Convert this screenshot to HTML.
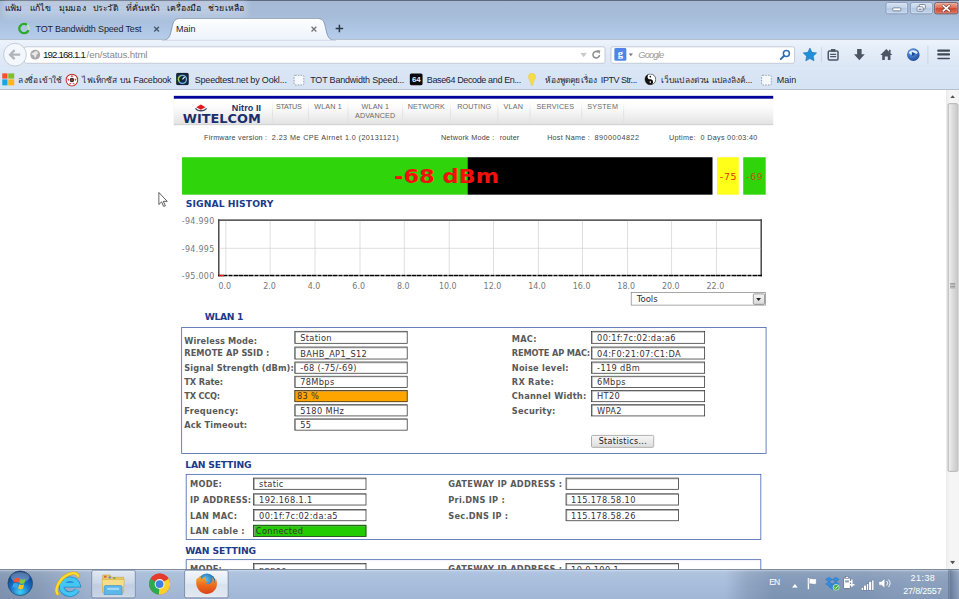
<!DOCTYPE html>
<html lang="th">
<head>
<meta charset="utf-8">
<title>Main</title>
<style>
*{box-sizing:border-box;margin:0;padding:0}
html,body{width:959px;height:599px;overflow:hidden;background:#fff}
#root{position:absolute;left:0;top:0;width:1280px;height:800px;transform-origin:0 0;transform:scale(0.74922,0.74875);overflow:hidden;background:#fff;font-family:"Liberation Sans",sans-serif;color:#000}
.a{position:absolute}
.t{position:absolute;height:20px;line-height:20px;white-space:nowrap}
.t .c{position:absolute;left:0;top:0;transform:translateX(-50%)}
.ui{font-family:"Liberation Sans","DejaVu Sans",sans-serif;color:#111}
.th{font-family:"Liberation Sans","DejaVu Sans",sans-serif;color:#111}
.vd{font-family:"DejaVu Sans","Liberation Sans",sans-serif}
.lb{font-family:"DejaVu Sans","Liberation Sans",sans-serif;font-weight:bold;color:#595959;letter-spacing:.3px}
.hd{font-family:"DejaVu Sans","Liberation Sans",sans-serif;font-weight:bold;color:#1b3b8b}
.nv{font-family:"Liberation Sans",sans-serif;color:#6a6a6a;text-transform:uppercase}
.in{position:absolute;background:#fff;border:1px solid #2e2e2e;box-shadow:inset 1px 1px 0 #9a9a9a}
.val{font-family:"DejaVu Sans","Liberation Sans",sans-serif;color:#3a3038;letter-spacing:.45px}
.ax{font-family:"DejaVu Sans","Liberation Sans",sans-serif;color:#787878}
</style>
</head>
<body>
<div id="root">
<div class="a" style="left:232.31px;top:127.9px;width:799.73px;height:4.27px;background:#04049a"></div>
<div class="a" style="left:232.31px;top:132.18px;width:799.73px;height:34.98px;background:linear-gradient(#ffffff 0%,#fbfbfb 35%,#e3e3e3 100%);border-bottom:1px solid #c4c4c4;box-shadow:0 1px 2px rgba(0,0,0,.18)"></div>
<svg class="a" style="left:259.01px;top:137.52px" width="20.03" height="12.68" viewBox="194 103 15 9.500"><path d="M196.200 107 L200.800 104.100 L205.300 107 L200.800 109.400 Z" fill="#e3181c"/><path d="M194.800 108 C197 112.300 204.600 112.300 207.200 108 L205.900 107.900 C203.800 110.400 197.800 110.400 196.100 107.900 Z" fill="#3a4863"/></svg>
<div class="t vd" style="left:244.46px;top:149px;font-size:15.6px;font-weight:bold;color:#1c2d6b"><span id="t1" style="display:inline-block;transform-origin:0 50%;transform:scaleX(1.1012)">WITELCOM</span></div>
<div class="t" style="left:309.48px;top:134px;font-size:12px;letter-spacing:0.141px;font-weight:bold;color:#1c2d6b"><span id="t2">Nitro II</span></div>
<div class="a" style="left:362.62px;top:133.51px;width:1.0px;height:32.04px;background:linear-gradient(rgba(0,0,0,0),rgba(0,0,0,.10),rgba(0,0,0,0))"></div>
<div class="a" style="left:411.21px;top:133.51px;width:1.0px;height:32.04px;background:linear-gradient(rgba(0,0,0,0),rgba(0,0,0,.10),rgba(0,0,0,0))"></div>
<div class="a" style="left:463.95px;top:133.51px;width:1.0px;height:32.04px;background:linear-gradient(rgba(0,0,0,0),rgba(0,0,0,.10),rgba(0,0,0,0))"></div>
<div class="a" style="left:536.72px;top:133.51px;width:1.0px;height:32.04px;background:linear-gradient(rgba(0,0,0,0),rgba(0,0,0,.10),rgba(0,0,0,0))"></div>
<div class="a" style="left:600.8px;top:133.51px;width:1.0px;height:32.04px;background:linear-gradient(rgba(0,0,0,0),rgba(0,0,0,.10),rgba(0,0,0,0))"></div>
<div class="a" style="left:664.22px;top:133.51px;width:1.0px;height:32.04px;background:linear-gradient(rgba(0,0,0,0),rgba(0,0,0,.10),rgba(0,0,0,0))"></div>
<div class="a" style="left:706.94px;top:133.51px;width:1.0px;height:32.04px;background:linear-gradient(rgba(0,0,0,0),rgba(0,0,0,.10),rgba(0,0,0,0))"></div>
<div class="a" style="left:775.7px;top:133.51px;width:1.0px;height:32.04px;background:linear-gradient(rgba(0,0,0,0),rgba(0,0,0,.10),rgba(0,0,0,0))"></div>
<div class="a" style="left:832.44px;top:133.51px;width:1.0px;height:32.04px;background:linear-gradient(rgba(0,0,0,0),rgba(0,0,0,.10),rgba(0,0,0,0))"></div>
<div class="t nv" style="left:368.22px;top:133px;font-size:9.6px;letter-spacing:-0.368px;"><span id="t3">STATUS</span></div>
<div class="t nv" style="left:419.49px;top:133px;font-size:9.6px;letter-spacing:0.197px;"><span id="t4">WLAN 1</span></div>
<div class="t nv" style="left:482.64px;top:133px;font-size:9.6px;letter-spacing:0.197px;"><span id="t5">WLAN 1</span></div>
<div class="t nv" style="left:473.97px;top:145px;font-size:9.6px;letter-spacing:0.113px;"><span id="t6">ADVANCED</span></div>
<div class="t nv" style="left:544.19px;top:133px;font-size:9.6px;letter-spacing:0.081px;"><span id="t7">NETWORK</span></div>
<div class="t nv" style="left:610.15px;top:133px;font-size:9.6px;letter-spacing:0.19px;"><span id="t8">ROUTING</span></div>
<div class="t nv" style="left:671.96px;top:133px;font-size:9.6px;letter-spacing:0.279px;"><span id="t9">VLAN</span></div>
<div class="t nv" style="left:716.02px;top:133px;font-size:9.6px;letter-spacing:0.284px;"><span id="t10">SERVICES</span></div>
<div class="t nv" style="left:783.71px;top:133px;font-size:9.6px;letter-spacing:0.307px;"><span id="t11">SYSTEM</span></div>
<div class="t" style="left:272.36px;top:174px;font-size:9.6px;letter-spacing:0.306px;color:#444"><span id="t12">Firmware version :</span></div>
<div class="t" style="left:362.88px;top:174px;font-size:9.6px;letter-spacing:0.558px;color:#444"><span id="t13">2.23 Me CPE Airnet 1.0 (20131121)</span></div>
<div class="t" style="left:588.52px;top:174px;font-size:9.6px;letter-spacing:0.316px;color:#444"><span id="t14">Network Mode :</span></div>
<div class="t" style="left:667.16px;top:174px;font-size:9.6px;letter-spacing:0.141px;color:#444"><span id="t15">router</span></div>
<div class="t" style="left:730.31px;top:174px;font-size:9.6px;letter-spacing:0.355px;color:#444"><span id="t16">Host Name :</span></div>
<div class="t" style="left:793.59px;top:174px;font-size:9.6px;letter-spacing:0.643px;color:#444"><span id="t17">8900004822</span></div>
<div class="t" style="left:892.92px;top:174px;font-size:9.6px;letter-spacing:0.386px;color:#444"><span id="t18">Uptime:</span></div>
<div class="t" style="left:935.11px;top:174px;font-size:9.6px;letter-spacing:0.407px;color:#444"><span id="t19">0 Days 00:03:40</span></div>
<div class="a" style="left:242.59px;top:210.01px;width:381.44px;height:49.93px;background:#2fd50a"></div>
<div class="a" style="left:624.03px;top:210.01px;width:327.24px;height:49.93px;background:#000"></div>
<div class="a" style="left:956.61px;top:210.01px;width:29.64px;height:49.8px;background:#ffff1a"></div>
<div class="a" style="left:991.99px;top:210.01px;width:30.44px;height:49.8px;background:#2fd50a"></div>
<div class="t vd" style="left:526.03px;top:225px;font-size:27px;font-weight:bold;color:#f2100c"><span id="t20" style="display:inline-block;transform-origin:0 50%;transform:scaleX(1.1106)">-68 dBm</span></div>
<div class="t vd" style="left:960.75px;top:226px;font-size:12.5px;letter-spacing:0.939px;color:#dd3500"><span id="t21">-75</span></div>
<div class="t vd" style="left:995.73px;top:226px;font-size:12.5px;letter-spacing:1.004px;color:#c8500a"><span id="t22">-69</span></div>
<div class="t hd" style="left:248.06px;top:263px;font-size:12.3px;letter-spacing:0.085px;"><span id="t23">SIGNAL HISTORY</span></div>
<div class="a" style="left:291.05px;top:292.92px;width:725.77px;height:76.37px;background:#fff;border:2px solid #4a4a4a;border-bottom:none"></div>
<div class="a" style="left:300.97px;top:295.06px;width:1.0px;height:72.1px;background:#d4d4d4"></div>
<div class="t ax" style="left:300.13px;width:0;top:372px;font-size:10.6px;"><span id="t24" class="c">0.0</span></div>
<div class="a" style="left:360.49px;top:295.06px;width:1.0px;height:72.1px;background:#d4d4d4"></div>
<div class="t ax" style="left:359.65px;width:0;top:372px;font-size:10.6px;"><span id="t25" class="c">2.0</span></div>
<div class="a" style="left:420.01px;top:295.06px;width:1.0px;height:72.1px;background:#d4d4d4"></div>
<div class="t ax" style="left:419.17px;width:0;top:372px;font-size:10.6px;"><span id="t26" class="c">4.0</span></div>
<div class="a" style="left:479.53px;top:295.06px;width:1.0px;height:72.1px;background:#d4d4d4"></div>
<div class="t ax" style="left:478.69px;width:0;top:372px;font-size:10.6px;"><span id="t27" class="c">6.0</span></div>
<div class="a" style="left:539.05px;top:295.06px;width:1.0px;height:72.1px;background:#d4d4d4"></div>
<div class="t ax" style="left:538.21px;width:0;top:372px;font-size:10.6px;"><span id="t28" class="c">8.0</span></div>
<div class="a" style="left:598.57px;top:295.06px;width:1.0px;height:72.1px;background:#d4d4d4"></div>
<div class="t ax" style="left:597.73px;width:0;top:372px;font-size:10.6px;"><span id="t29" class="c">10.0</span></div>
<div class="a" style="left:658.09px;top:295.06px;width:1.0px;height:72.1px;background:#d4d4d4"></div>
<div class="t ax" style="left:657.25px;width:0;top:372px;font-size:10.6px;"><span id="t30" class="c">12.0</span></div>
<div class="a" style="left:717.61px;top:295.06px;width:1.0px;height:72.1px;background:#d4d4d4"></div>
<div class="t ax" style="left:716.77px;width:0;top:372px;font-size:10.6px;"><span id="t31" class="c">14.0</span></div>
<div class="a" style="left:777.13px;top:295.06px;width:1.0px;height:72.1px;background:#d4d4d4"></div>
<div class="t ax" style="left:776.29px;width:0;top:372px;font-size:10.6px;"><span id="t32" class="c">16.0</span></div>
<div class="a" style="left:836.65px;top:295.06px;width:1.0px;height:72.1px;background:#d4d4d4"></div>
<div class="t ax" style="left:835.81px;width:0;top:372px;font-size:10.6px;"><span id="t33" class="c">18.0</span></div>
<div class="a" style="left:896.17px;top:295.06px;width:1.0px;height:72.1px;background:#d4d4d4"></div>
<div class="t ax" style="left:895.33px;width:0;top:372px;font-size:10.6px;"><span id="t34" class="c">20.0</span></div>
<div class="a" style="left:955.69px;top:295.06px;width:1.0px;height:72.1px;background:#d4d4d4"></div>
<div class="t ax" style="left:954.85px;width:0;top:372px;font-size:10.6px;"><span id="t35" class="c">22.0</span></div>
<div class="a" style="left:293.06px;top:330.97px;width:721.9px;height:1.0px;background:#d4d4d4"></div>
<div class="a" style="left:291.05px;top:367.02px;width:725.77px;height:2.27px;background:repeating-linear-gradient(90deg,#000 0,#000 5px,#777 5px,#777 7px)"></div>
<div class="a" style="left:292.12px;top:367.02px;width:6.94px;height:2.27px;background:#e01818"></div>
<div class="t ax" style="left:242.59px;top:285px;font-size:10.6px;letter-spacing:0.417px;"><span id="t36">-94.990</span></div>
<div class="t ax" style="left:242.59px;top:322px;font-size:10.6px;letter-spacing:0.417px;"><span id="t37">-94.995</span></div>
<div class="t ax" style="left:242.59px;top:359px;font-size:10.6px;letter-spacing:0.417px;"><span id="t38">-95.000</span></div>
<div class="a" style="left:842.46px;top:390.39px;width:179.31px;height:17.62px;background:#fff;border:1px solid #8a8a8a"></div>
<div class="a" style="left:1004.81px;top:391.59px;width:15.75px;height:15.35px;background:linear-gradient(#f4f4f4,#d9d9d9);border:1px solid #7a7a7a;border-radius:2px"></div>
<svg class="a" style="left:1009.32px;top:397.87px" width="7" height="4" viewBox="0 0 8 5"><path d="M0 0h8L4 5z" fill="#222"/></svg>
<div class="t vd" style="left:849.8px;top:389px;font-size:11.5px;letter-spacing:-0.076px;color:#3a3038"><span id="t39">Tools</span></div>
<div class="t hd" style="left:273.3px;top:414px;font-size:12.3px;letter-spacing:-0.501px;"><span id="t40">WLAN 1</span></div>
<div class="a" style="left:242.19px;top:436.85px;width:780.51px;height:169.16px;border:1px solid #3758a8"></div>
<div class="t lb" style="left:245.93px;top:447px;font-size:11px;letter-spacing:0.155px;"><span id="t41">Wireless Mode:</span></div>
<div class="in" style="left:393.19px;top:442.46px;width:151.13px;height:16.42px;background:#fff"></div>
<div class="t val" style="left:400.67px;top:442px;font-size:11px;"><span id="t42">Station</span></div>
<div class="t lb" style="left:245.93px;top:463px;font-size:11px;letter-spacing:0.076px;"><span id="t43">REMOTE AP SSID :</span></div>
<div class="in" style="left:393.19px;top:463.42px;width:151.13px;height:16.42px;background:#fff"></div>
<div class="t val" style="left:400.67px;top:464px;font-size:11px;"><span id="t44">BAHB_AP1_S12</span></div>
<div class="t lb" style="left:245.93px;top:482px;font-size:11px;letter-spacing:0.138px;"><span id="t45">Signal Strength (dBm):</span></div>
<div class="in" style="left:393.19px;top:482.51px;width:151.13px;height:16.42px;background:#fff"></div>
<div class="t val" style="left:400.67px;top:482px;font-size:11px;"><span id="t46">-68 (-75/-69)</span></div>
<div class="t lb" style="left:245.93px;top:501px;font-size:11px;letter-spacing:-0.147px;"><span id="t47">TX Rate:</span></div>
<div class="in" style="left:393.19px;top:501.6px;width:151.13px;height:16.42px;background:#fff"></div>
<div class="t val" style="left:400.67px;top:501px;font-size:11px;"><span id="t48">78Mbps</span></div>
<div class="t lb" style="left:245.93px;top:520px;font-size:11px;letter-spacing:-0.32px;"><span id="t49">TX CCQ:</span></div>
<div class="in" style="left:393.19px;top:520.69px;width:151.13px;height:16.42px;background:#ffa500"></div>
<div class="t val" style="left:396.4px;top:520px;font-size:11px;"><span id="t50">83 %</span></div>
<div class="t lb" style="left:245.93px;top:540px;font-size:11px;letter-spacing:0.381px;"><span id="t51">Frequency:</span></div>
<div class="in" style="left:393.19px;top:539.79px;width:151.13px;height:16.42px;background:#fff"></div>
<div class="t val" style="left:400.67px;top:540px;font-size:11px;"><span id="t52">5180 MHz</span></div>
<div class="t lb" style="left:245.93px;top:559px;font-size:11px;letter-spacing:0.221px;"><span id="t53">Ack Timeout:</span></div>
<div class="in" style="left:393.19px;top:558.88px;width:151.13px;height:16.42px;background:#fff"></div>
<div class="t val" style="left:400.67px;top:559px;font-size:11px;"><span id="t54">55</span></div>
<div class="t lb" style="left:683.18px;top:444px;font-size:11px;"><span id="t55">MAC:</span></div>
<div class="in" style="left:789.45px;top:442.46px;width:151.13px;height:16.42px;background:#fff"></div>
<div class="t val" style="left:796.93px;top:442px;font-size:11px;"><span id="t56">00:1f:7c:02:da:a6</span></div>
<div class="t lb" style="left:683.18px;top:463px;font-size:11px;letter-spacing:-0.225px;"><span id="t57">REMOTE AP MAC:</span></div>
<div class="in" style="left:789.45px;top:463.42px;width:151.13px;height:16.42px;background:#fff"></div>
<div class="t val" style="left:796.93px;top:464px;font-size:11px;"><span id="t58">04:F0:21:07:C1:DA</span></div>
<div class="t lb" style="left:683.18px;top:482px;font-size:11px;"><span id="t59">Noise level:</span></div>
<div class="in" style="left:789.45px;top:482.51px;width:151.13px;height:16.42px;background:#fff"></div>
<div class="t val" style="left:796.93px;top:482px;font-size:11px;"><span id="t60">-119 dBm</span></div>
<div class="t lb" style="left:683.18px;top:501px;font-size:11px;"><span id="t61">RX Rate:</span></div>
<div class="in" style="left:789.45px;top:501.6px;width:151.13px;height:16.42px;background:#fff"></div>
<div class="t val" style="left:796.93px;top:501px;font-size:11px;"><span id="t62">6Mbps</span></div>
<div class="t lb" style="left:683.18px;top:520px;font-size:11px;"><span id="t63">Channel Width:</span></div>
<div class="in" style="left:789.45px;top:520.69px;width:151.13px;height:16.42px;background:#fff"></div>
<div class="t val" style="left:796.93px;top:520px;font-size:11px;"><span id="t64">HT20</span></div>
<div class="t lb" style="left:683.18px;top:540px;font-size:11px;"><span id="t65">Security:</span></div>
<div class="in" style="left:789.45px;top:539.79px;width:151.13px;height:16.42px;background:#fff"></div>
<div class="t val" style="left:796.93px;top:540px;font-size:11px;"><span id="t66">WPA2</span></div>
<div class="a" style="left:789.32px;top:580.77px;width:83.58px;height:17.36px;background:linear-gradient(#f6f6f6,#dedede);border:1px solid #959595;border-radius:2px"></div>
<div class="t val" style="left:799.07px;top:579px;font-size:10.6px;letter-spacing:0.463px;color:#222"><span id="t67">Statistics...</span></div>
<div class="t hd" style="left:247.26px;top:611px;font-size:12.3px;letter-spacing:-0.282px;"><span id="t68">LAN SETTING</span></div>
<div class="a" style="left:247.8px;top:632.84px;width:768.49px;height:88.52px;border:1px solid #3758a8"></div>
<div class="t lb" style="left:253.67px;top:638px;font-size:11px;"><span id="t69">MODE:</span></div>
<div class="in" style="left:338.32px;top:637.92px;width:151.13px;height:16.42px;background:#fff"></div>
<div class="t val" style="left:345.79px;top:638px;font-size:11px;"><span id="t70">static</span></div>
<div class="t lb" style="left:253.67px;top:659px;font-size:11px;"><span id="t71">IP ADDRESS:</span></div>
<div class="in" style="left:338.32px;top:658.88px;width:151.13px;height:16.42px;background:#fff"></div>
<div class="t val" style="left:345.79px;top:659px;font-size:11px;"><span id="t72">192.168.1.1</span></div>
<div class="t lb" style="left:253.67px;top:680px;font-size:11px;"><span id="t73">LAN MAC:</span></div>
<div class="in" style="left:338.32px;top:679.84px;width:151.13px;height:16.42px;background:#fff"></div>
<div class="t val" style="left:345.79px;top:680px;font-size:11px;"><span id="t74">00:1f:7c:02:da:a5</span></div>
<div class="t lb" style="left:253.67px;top:700px;font-size:11px;"><span id="t75">LAN cable :</span></div>
<div class="in" style="left:338.32px;top:700.8px;width:151.13px;height:16.42px;background:#22cc00"></div>
<div class="t val" style="left:341.52px;top:700px;font-size:11px;"><span id="t76">Connected</span></div>
<div class="t lb" style="left:598.4px;top:638px;font-size:11px;letter-spacing:0.361px;"><span id="t77">GATEWAY IP ADDRESS :</span></div>
<div class="in" style="left:754.74px;top:637.92px;width:151.13px;height:16.42px;background:#fff"></div>
<div class="t lb" style="left:598.4px;top:659px;font-size:11px;"><span id="t78">Pri.DNS IP :</span></div>
<div class="in" style="left:754.74px;top:658.88px;width:151.13px;height:16.42px;background:#fff"></div>
<div class="t val" style="left:762.22px;top:659px;font-size:11px;"><span id="t79">115.178.58.10</span></div>
<div class="t lb" style="left:598.4px;top:680px;font-size:11px;"><span id="t80">Sec.DNS IP :</span></div>
<div class="in" style="left:754.74px;top:679.84px;width:151.13px;height:16.42px;background:#fff"></div>
<div class="t val" style="left:762.22px;top:680px;font-size:11px;"><span id="t81">115.178.58.26</span></div>
<div class="t hd" style="left:247.26px;top:726px;font-size:12.3px;letter-spacing:-0.186px;"><span id="t82">WAN SETTING</span></div>
<div class="a" style="left:247.8px;top:746.86px;width:768.49px;height:80.91px;border:1px solid #3758a8"></div>
<div class="t lb" style="left:253.67px;top:751px;font-size:11px;"><span id="t83">MODE:</span></div>
<div class="in" style="left:338.32px;top:751.8px;width:151.13px;height:16.42px;background:#fff"></div>
<div class="t val" style="left:345.79px;top:752px;font-size:11px;"><span id="t84">pppoe</span></div>
<div class="t lb" style="left:598.4px;top:751px;font-size:11px;letter-spacing:0.361px;"><span id="t85">GATEWAY IP ADDRESS :</span></div>
<div class="in" style="left:754.74px;top:751.8px;width:151.13px;height:16.42px;background:#fff"></div>
<div class="t val" style="left:762.22px;top:752px;font-size:11px;"><span id="t86">10.0.100.1</span></div>
<div class="a" style="left:1263.28px;top:120.16px;width:17.36px;height:640.32px;background:linear-gradient(90deg,#efefef,#f6f6f6 30%,#f4f4f4);border-left:1px solid #e6e6e6"></div>
<div class="a" style="left:1264.75px;top:137.52px;width:14.29px;height:491.99px;background:linear-gradient(90deg,#f2f2f2 0,#dcdcdc 45%,#c9c9c9 100%);border:1px solid #9b9b9b;border-radius:2px"></div>
<svg class="a" style="left:1268.33px;top:126.77px" width="7" height="4.500" viewBox="0 0 8 5"><path d="M0 5h8L4 0z" fill="#505050"/></svg>
<svg class="a" style="left:1268.33px;top:749.1999999999999px" width="7" height="4.500" viewBox="0 0 8 5"><path d="M0 0h8L4 5z" fill="#505050"/></svg>
<div class="a" style="left:1268.36px;top:378.37px;width:6.94px;height:0.93px;background:#8c8c8c"></div>
<div class="a" style="left:1268.36px;top:380.37px;width:6.94px;height:0.93px;background:#8c8c8c"></div>
<div class="a" style="left:1268.36px;top:382.38px;width:6.94px;height:0.93px;background:#8c8c8c"></div>
<div class="a" style="left:1268.36px;top:384.38px;width:6.94px;height:0.93px;background:#8c8c8c"></div>
<div class="a" style="left:0.0px;top:0.0px;width:1281.71px;height:53.14px;background:linear-gradient(#a5b9d5 0,#a6bcd9 38%,#abc3e0 62%,#b5cdea 100%);border-top:1px solid #2e3d57;border-bottom:1px solid #71849d"></div>
<div class="a" style="left:0.0px;top:53.14px;width:1281.71px;height:38.99px;background:linear-gradient(#edf3fb 0,#e3ecf8 40%,#dae6f5 100%)"></div>
<div class="a" style="left:0.0px;top:92.12px;width:1281.71px;height:28.04px;background:linear-gradient(#dae6f5,#d6e3f4);border-bottom:1px solid #9eabbc"></div>
<div class="a" style="left:13.35px;top:6.68px;width:307.08px;height:6.68px;background:rgba(255,255,255,.26);box-shadow:0 0 9px 9px rgba(255,255,255,.26)"></div>
<div class="t th" style="left:6.68px;top:1px;font-size:11.6px;"><span id="t87">แฟ้ม</span></div>
<div class="t th" style="left:40.05px;top:1px;font-size:11.6px;"><span id="t88">แก้ไข</span></div>
<div class="t th" style="left:78.1px;top:1px;font-size:11.6px;"><span id="t89">มุมมอง</span></div>
<div class="t th" style="left:124.17px;top:1px;font-size:11.6px;"><span id="t90">ประวัติ</span></div>
<div class="t th" style="left:167.56px;top:1px;font-size:11.6px;"><span id="t91">ที่คั่นหน้า</span></div>
<div class="t th" style="left:222.96px;top:1px;font-size:11.6px;"><span id="t92">เครื่องมือ</span></div>
<div class="t th" style="left:277.7px;top:1px;font-size:11.6px;"><span id="t93">ช่วยเหลือ</span></div>
<div class="a" style="left:1182.38px;top:3.34px;width:29.37px;height:15.75px;background:linear-gradient(#d3e0f1,#c2d3ea 48%,#b4c8e3 52%,#c3d5ec);border:1px solid #7f93b1;border-radius:3px;box-shadow:inset 0 0 0 1px rgba(255,255,255,.5)"></div>
<div class="a" style="left:1215.49px;top:3.34px;width:29.37px;height:15.75px;background:linear-gradient(#d3e0f1,#c2d3ea 48%,#b4c8e3 52%,#c3d5ec);border:1px solid #7f93b1;border-radius:3px;box-shadow:inset 0 0 0 1px rgba(255,255,255,.5)"></div>
<div class="a" style="left:1247.0px;top:3.34px;width:31.78px;height:15.75px;background:linear-gradient(#eea995,#e06a52 48%,#d24a32 52%,#dd6e55);border:1px solid #6a3a3a;border-radius:3px;box-shadow:inset 0 0 0 1px rgba(255,255,255,.35)"></div>
<div class="a" style="left:1190.92px;top:10.15px;width:12.02px;height:4.41px;background:#fff;border:1px solid #55657f;border-radius:2px"></div>
<svg class="a" style="left:1223.27px;top:4.91px" width="13" height="11" viewBox="0 0 13 11"><rect x="4" y="1" width="8" height="6" rx="1" fill="#fff" stroke="#55657f"/><rect x="1" y="4" width="8" height="6" rx="1" fill="#fff" stroke="#55657f"/><rect x="3" y="6.500" width="4" height="2" fill="#7f90aa"/></svg>
<svg class="a" style="left:1257.15px;top:6.08px" width="12" height="10" viewBox="0 0 12 10"><path d="M2 1.500L10 8.500M10 1.500L2 8.500" stroke="#6b3530" stroke-width="3.800" stroke-linecap="square"/><path d="M2 1.500L10 8.500M10 1.500L2 8.500" stroke="#fff" stroke-width="2.200" stroke-linecap="square"/></svg>
<svg class="a" style="left:216.29px;top:23.77px" width="232" height="30" viewBox="0 0 232 30"><defs><linearGradient id="tg" x1="0" y1="0" x2="0" y2="1"><stop offset="0" stop-color="#fdfeff"/><stop offset="1" stop-color="#edf3fb"/></linearGradient></defs><path d="M0 30 C10 30 11 24 13.5 13 C15.5 3 18 0.5 26 0.5 L206 0.5 C214 0.5 216.500 3 218.500 13 C221 24 222 30 232 30 Z" fill="url(#tg)" stroke="#7c8ea8" stroke-width="1.100"/><rect x="0" y="29.2" width="232" height="2" fill="#edf3fb"/></svg>
<div class="t ui" style="left:47.4px;top:29px;font-size:12px;letter-spacing:-0.199px;color:#1c2433"><span id="t94">TOT Bandwidth Speed Test</span></div>
<div class="t ui" style="left:234.98px;top:29px;font-size:12px;letter-spacing:0.005px;color:#2a1a2a"><span id="t95">Main</span></div>
<svg class="a" style="left:23.64px;top:30.450000000000003px" width="16" height="16" viewBox="0 0 16 16"><circle cx="8" cy="8" r="6.300" fill="none" stroke="#bfe3bf" stroke-width="3"/><path d="M12 3.200 A6.300 6.300 0 1 0 14 10.200" fill="none" stroke="#2fa82f" stroke-width="3.200"/></svg>
<svg class="a" style="left:203.95px;top:33.72px" width="10" height="10" viewBox="0 0 10 10"><path d="M1.800 1.800L8.200 8.200M8.200 1.800L1.800 8.200" stroke="#4a5870" stroke-width="1.800"/></svg>
<svg class="a" style="left:414.23px;top:33.72px" width="10" height="10" viewBox="0 0 10 10"><path d="M1.800 1.800L8.200 8.200M8.200 1.800L1.800 8.200" stroke="#777" stroke-width="1.800"/></svg>
<svg class="a" style="left:447.0px;top:32.45px" width="12" height="12" viewBox="0 0 12 12"><path d="M6 1V11M1 6H11" stroke="#2b3648" stroke-width="2"/></svg>
<div class="a" style="left:32.04px;top:61.68px;width:776.23px;height:22.96px;background:#fff;border:1px solid #b3bfce;border-radius:3px"></div>
<svg class="a" style="left:2.629999999999999px;top:56.03px" width="34" height="34" viewBox="0 0 34 34"><circle cx="17" cy="17" r="15.200" fill="#f4f8fd" stroke="#b3bfce" stroke-width="1"/><path d="M24 17H11M16.500 11L10.500 17L16.500 23" fill="none" stroke="#b1b5bb" stroke-width="3.200" stroke-linejoin="miter"/></svg>
<svg class="a" style="left:38.73px;top:65.03px" width="16" height="16" viewBox="0 0 16 16"><circle cx="8" cy="8" r="6.600" fill="#a9a9a9"/><path d="M3 6c2-1 3 0 4-2 1-1 3-1 4 0l1 2-2 2c-1 1 0 3-2 4-1 0-1-2-2-3S3 8 3 6z" fill="#e8e8e8"/></svg>
<div class="t ui" style="left:57.41px;top:63px;font-size:13px;letter-spacing:-1.155px;color:#111"><span id="t96">192.168.1.1</span></div>
<div class="t ui" style="left:115.62px;top:63px;font-size:13px;letter-spacing:-0.231px;color:#8a8a8a"><span id="t97">/en/status.html</span></div>
<svg class="a" style="left:774.31px;top:70.03px" width="10" height="7" viewBox="0 0 10 7"><path d="M0.500 0.500h9L5 6.500z" fill="#c9c9c9"/></svg>
<svg class="a" style="left:788.99px;top:65.9px" width="14" height="14" viewBox="0 0 14 14"><path d="M11.200 7.600A4.400 4.400 0 1 1 9.600 3.600" fill="none" stroke="#8d8d8d" stroke-width="2"/><path d="M7.600 0.800L12.400 1.400L11 6z" fill="#8d8d8d"/></svg>
<div class="a" style="left:815.22px;top:61.68px;width:246.19px;height:22.96px;background:#fff;border:1px solid #b3bfce;border-radius:3px"></div>
<div class="a" style="left:820.43px;top:64.35px;width:15.22px;height:17.09px;background:#4d86ea;border-radius:2px"></div>
<div class="t ui" style="left:828.17px;width:0;top:62px;font-size:14px;color:#fff;font-weight:bold;font-family:'Liberation Serif',serif"><span id="t98" class="c">g</span></div>
<svg class="a" style="left:839.46px;top:71.43px" width="6" height="4" viewBox="0 0 6 4"><path d="M0 0h6L3 4z" fill="#7a7a7a"/></svg>
<div class="t ui" style="left:851.8px;top:63px;font-size:12.5px;letter-spacing:-1.12px;color:#9a9a9a;font-style:italic"><span id="t99">Google</span></div>
<svg class="a" style="left:1039.8px;top:64.9px" width="16" height="16" viewBox="0 0 16 16"><circle cx="9.600" cy="6.400" r="4" fill="none" stroke="#2f6fb5" stroke-width="2"/><path d="M6.600 9.400L2 14" stroke="#2f6fb5" stroke-width="2.600" stroke-linecap="round"/></svg>
<svg class="a" style="left:1071.04px;top:62.5px" width="20" height="20" viewBox="0 0 20 20"><path d="M10 1.200l2.700 5.700 6.200.8-4.500 4.300 1.100 6.200L10 15.200l-5.500 3 1.100-6.200L1.100 7.700l6.200-.8z" fill="#1f8fdc" stroke="#1a6fb0" stroke-width=".8"/></svg>
<div class="a" style="left:1096.4px;top:63.42px;width:0.93px;height:19.36px;background:#c3cedd"></div>
<svg class="a" style="left:1102.62px;top:63.5px" width="18" height="18" viewBox="0 0 18 18"><rect x="2.500" y="4" width="13" height="12" rx="1.500" fill="none" stroke="#4b5563" stroke-width="2"/><rect x="6" y="1.500" width="6" height="3.500" fill="#4b5563"/><path d="M5 8.500h8M5 11.500h8" stroke="#4b5563" stroke-width="1.600"/></svg>
<svg class="a" style="left:1137.6px;top:63.5px" width="18" height="18" viewBox="0 0 18 18"><path d="M6 1.500h6v7h4.200L9 16.500 1.800 8.500H6z" fill="#4b5563"/></svg>
<svg class="a" style="left:1173.51px;top:63.5px" width="18" height="18" viewBox="0 0 18 18"><path d="M9 1.500L17 9.500h-2.500V16H11v-4.500H7V16H3.500V9.500H1z" fill="#4b5563"/><rect x="12.500" y="2.500" width="2.200" height="4" fill="#4b5563"/></svg>
<svg class="a" style="left:1208.96px;top:62.5px" width="20" height="20" viewBox="0 0 20 20"><defs><radialGradient id="gb" cx=".4" cy=".3" r=".8"><stop offset="0" stop-color="#6aa8ec"/><stop offset="1" stop-color="#123f8f"/></radialGradient></defs><circle cx="10" cy="10" r="8.400" fill="url(#gb)"/><path d="M4 7c3-4 9-4 12 0-2 4-9 5-12 0z" fill="#fff" opacity=".85"/><path d="M8 6l6 3-6 3z" fill="#1a4da0"/></svg>
<div class="a" style="left:1237.92px;top:60.75px;width:0.93px;height:24.7px;background:#c3cedd"></div>
<div class="a" style="left:1250.73px;top:65.75px;width:17.36px;height:2.8px;background:#3f4957;border-radius:1px"></div>
<div class="a" style="left:1250.73px;top:71.23px;width:17.36px;height:2.8px;background:#3f4957;border-radius:1px"></div>
<div class="a" style="left:1250.73px;top:76.7px;width:17.36px;height:2.8px;background:#3f4957;border-radius:1px"></div>
<div class="a" style="left:2.94px;top:98.0px;width:7.48px;height:7.34px;background:#f0532a"></div>
<div class="a" style="left:11.48px;top:98.0px;width:7.48px;height:7.34px;background:#83bd2a"></div>
<div class="a" style="left:2.94px;top:106.28px;width:7.48px;height:7.34px;background:#1ba3ea"></div>
<div class="a" style="left:11.48px;top:106.28px;width:7.48px;height:7.34px;background:#fcb714"></div>
<div class="t th" style="left:24.57px;top:97px;font-size:11.2px;color:#1c2230"><span id="t100">ลงชื่อเข้าใช้</span></div>
<svg class="a" style="left:87.13px;top:97.68px" width="18" height="18" viewBox="0 0 18 18"><circle cx="9" cy="9" r="7.800" fill="#fff" stroke="#c42a2a" stroke-width="1.400"/><path d="M9 2.200l2.200 2.400H6.800zM2.600 7l2.800.4-1 3zM15.400 7l-2.800.4 1 3zM5 15l1.400-2.600 2 1.800zM13 15l-1.400-2.600-2 1.800z" fill="#d63a3a"/><circle cx="9" cy="9" r="3" fill="#333"/><circle cx="9" cy="9" r="1.300" fill="#d63a3a"/></svg>
<div class="t th" style="left:110.01px;top:97px;font-size:11.2px;color:#1c2230"><span id="t101">ไฟเท็กซัส บน</span></div>
<div class="t ui" style="left:178.24px;top:97px;font-size:12px;letter-spacing:-0.3px;color:#1c2230"><span id="t102">Facebook</span></div>
<svg class="a" style="left:234.62px;top:97.37px" width="17" height="17" viewBox="0 0 17 17"><rect x=".5" y=".5" width="16" height="16" rx="2" fill="#16283e" stroke="#0b1624"/><circle cx="8.500" cy="9" r="5.400" fill="none" stroke="#6fb6e6" stroke-width="1.800"/><path d="M3.800 11.500A5.400 5.400 0 0 1 6 4.200" fill="none" stroke="#9ad14b" stroke-width="1.800"/><path d="M8.500 9l3-3.200" stroke="#fff" stroke-width="1.400"/></svg>
<div class="t ui" style="left:259.81px;top:97px;font-size:12px;letter-spacing:-0.216px;color:#1c2230"><span id="t103">Speedtest.net by Ookl...</span></div>
<svg class="a" style="left:390.8px;top:98.54px" width="16" height="16" viewBox="0 0 16 16"><rect x="1.500" y="1.500" width="13" height="13" rx="1.500" fill="#f4f8fd" stroke="#8a93a3" stroke-width="1.200" stroke-dasharray="2 1.600"/></svg>
<div class="t ui" style="left:414.02px;top:97px;font-size:12px;letter-spacing:-0.254px;color:#1c2230"><span id="t104">TOT Bandwidth Speed...</span></div>
<div class="a" style="left:547.4px;top:97.73px;width:16.29px;height:16.29px;background:#0b0b0b;border-radius:2px"></div>
<div class="t ui" style="left:555.54px;width:0;top:96px;font-size:10.5px;color:#f0f0f0;font-weight:bold;letter-spacing:-.3px"><span id="t105" class="c">64</span></div>
<div class="t ui" style="left:569.69px;top:97px;font-size:12px;letter-spacing:-0.494px;color:#1c2230"><span id="t106">Base64 Decode and En...</span></div>
<svg class="a" style="left:704.28px;top:97.14px" width="12" height="18" viewBox="0 0 12 18"><path d="M6 .8C2.600.8.800 3.400 1.400 6.600 2 9.600 4.200 11 5 17h2c.8-6 3-7.400 3.600-10.400C11.200 3.400 9.400.8 6 .8z" fill="#f7dc4a" stroke="#e4c62e" stroke-width=".6"/></svg>
<div class="t th" style="left:728.04px;top:97px;font-size:11.2px;color:#1c2230"><span id="t107">ห้องพูดคุยเรื่อง</span></div>
<div class="t ui" style="left:802.0px;top:97px;font-size:12px;letter-spacing:-0.623px;color:#1c2230"><span id="t108">IPTV Str...</span></div>
<svg class="a" style="left:860.36px;top:98.28px" width="16" height="16" viewBox="0 0 16 16"><circle cx="8" cy="8" r="7.200" fill="#fff" stroke="#111" stroke-width=".8"/><path d="M8 .8a7.200 7.200 0 0 0 0 14.400a3.600 3.600 0 0 0 0-7.200a3.600 3.600 0 0 1 0-7.200z" fill="#111"/><circle cx="8" cy="4.400" r="1.100" fill="#111"/><circle cx="8" cy="11.600" r="1.100" fill="#fff"/></svg>
<div class="t th" style="left:882.78px;top:97px;font-size:11.2px;color:#1c2230"><span id="t109">เว็บแปลงด่วน แปลงลิงค์...</span></div>
<svg class="a" style="left:1015.23px;top:98.54px" width="16" height="16" viewBox="0 0 16 16"><rect x="1.500" y="1.500" width="13" height="13" rx="1.500" fill="#f4f8fd" stroke="#8a93a3" stroke-width="1.200" stroke-dasharray="2 1.600"/></svg>
<div class="t ui" style="left:1036.72px;top:97px;font-size:12px;letter-spacing:0.005px;color:#1c2230"><span id="t110">Main</span></div>
<div class="a" style="left:0.0px;top:759.81px;width:1281.71px;height:41.26px;background:linear-gradient(rgba(255,255,255,.28) 0,rgba(255,255,255,.08) 10%,rgba(255,255,255,0) 45%,rgba(40,60,100,.06) 100%),linear-gradient(90deg,#8195b2 0,#899db9 4%,#9cafca 8%,#a6bad6 10.500%,#a8bedc 25%,#a8bedc 75.500%,#8fa5c2 77.800%,#8298b7 80.500%,#8399b8 90%,#8ba0bd 95%,#8a9fbc 100%);border-top:1px solid #4f5f78"></div>
<div class="a" style="left:0.0px;top:760.88px;width:1281.71px;height:0.93px;background:rgba(255,255,255,.35)"></div>
<div class="a" style="left:122.03px;top:761.01px;width:59.01px;height:38.45px;background:linear-gradient(rgba(255,255,255,.62),rgba(255,255,255,.42) 48%,rgba(255,255,255,.30) 52%,rgba(255,255,255,.45));border:1px solid #6e819c;border-radius:3px;box-shadow:inset 0 0 0 1px rgba(255,255,255,.5)"></div>
<div class="a" style="left:246.33px;top:761.01px;width:58.48px;height:38.45px;background:linear-gradient(rgba(255,255,255,.85),rgba(255,255,255,.66) 48%,rgba(255,255,255,.55) 52%,rgba(255,255,255,.7));border:1px solid #6e819c;border-radius:3px;box-shadow:inset 0 0 0 1px rgba(255,255,255,.6)"></div>
<svg class="a" style="left:9.100000000000001px;top:761.44px" width="36" height="36" viewBox="0 0 36 36"><defs><radialGradient id="ob" cx=".5" cy=".85" r=".9"><stop offset="0" stop-color="#3fd0f5"/><stop offset=".45" stop-color="#1a6fc2"/><stop offset="1" stop-color="#0c2f6c"/></radialGradient></defs><circle cx="18" cy="18" r="16.400" fill="url(#ob)" stroke="#27476f" stroke-width="1"/><ellipse cx="18" cy="10" rx="12.500" ry="7" fill="#fff" opacity=".28"/><path d="M10.500 11.500c2.200-1.300 4.200-1.200 6.400.2l-1.400 5.600c-2.200-1.400-4.200-1.500-6.400-.2z" fill="#f0562a"/><path d="M18.400 12.200c2.200 1.300 4.300 1.300 6.600 0l-1.400 5.600c-2.300 1.300-4.400 1.300-6.600 0z" fill="#8cc63f"/><path d="M8.700 18.700c2.200-1.300 4.200-1.200 6.400.2l-1.400 5.600c-2.200-1.400-4.200-1.500-6.400-.2z" fill="#3aa5ef"/><path d="M16.600 19.400c2.200 1.300 4.300 1.300 6.600 0l-1.400 5.600c-2.300 1.300-4.400 1.300-6.600 0z" fill="#fcc419"/></svg>
<svg class="a" style="left:72.1px;top:761.01px" width="37.38" height="37.38" viewBox="54 570 28 28"><path d="M77.300 590.200A8.300 7.500 0 1 1 77.900 584.900L62.500 584.900" fill="none" stroke="#1a86cf" stroke-width="5.400"/><path d="M77.300 590.200A8.300 7.500 0 1 1 77.900 584.900L62.500 584.900" fill="none" stroke="#43c6f2" stroke-width="3.900"/><path d="M78.300 576.200C76.500 570.500 64 573.500 58.500 584C56.200 588.500 56 592 57.600 594" fill="none" stroke="#d9a514" stroke-width="3.400" stroke-linecap="round"/><path d="M78.300 576.200C76.500 570.500 64 573.500 58.500 584C56.200 588.500 56 592 57.600 594" fill="none" stroke="#fbdc2f" stroke-width="2.300" stroke-linecap="round"/></svg>
<svg class="a" style="left:133.4px;top:763.71px" width="36" height="32" viewBox="0 0 36 32"><path d="M4 4h10l2 3h16v20H4z" fill="#e9c766" stroke="#c9a43e" stroke-width=".8"/><rect x="6" y="5" width="3" height="2.400" fill="#d8573a"/><rect x="12" y="6" width="3" height="2.400" fill="#5b83c9"/><rect x="18" y="7" width="3" height="2.400" fill="#6dae4a"/><path d="M3 10h30l-1.500 18h-27z" fill="#f6dd8c" stroke="#d4b24a" stroke-width=".8"/><path d="M8 18h20c1.200 0 2 .8 2 2v10H6V20c0-1.200.8-2 2-2z" fill="#5cb7ea" stroke="#3a8fc8" stroke-width=".8"/><rect x="10" y="21" width="16" height="3" fill="#9fd7f6"/></svg>
<svg class="a" style="left:197.95px;top:764.84px" width="30" height="30" viewBox="0 0 30 30"><circle cx="15" cy="15" r="14" fill="#e33b2e"/><path d="M15 15L2.900 8A14 14 0 0 0 14 28.960L20.500 18z" fill="#2da94f"/><path d="M15 15l-1 13.960A14 14 0 0 0 27.100 8H15z" fill="#fdd12c"/><path d="M15 15L27.100 8A14 14 0 0 0 2.900 8z" fill="#e33b2e"/><circle cx="15" cy="15" r="6.600" fill="#f4f4f4"/><circle cx="15" cy="15" r="5.200" fill="#3f7fe0"/></svg>
<svg class="a" style="left:259.3px;top:763.44px" width="32" height="32" viewBox="0 0 32 32"><defs><radialGradient id="fg" cx=".45" cy=".35" r=".7"><stop offset="0" stop-color="#59c3f2"/><stop offset="1" stop-color="#163e8a"/></radialGradient><linearGradient id="ff" x1="0" y1="0" x2="0" y2="1"><stop offset="0" stop-color="#f9b233"/><stop offset=".45" stop-color="#f0711c"/><stop offset="1" stop-color="#d9431a"/></linearGradient></defs><circle cx="17" cy="15" r="12" fill="url(#fg)"/><path d="M3.200 10.500C1.800 17 4 25.500 11.500 29c7.500 3.400 16.400-.4 18.600-8.600 1-3.800.6-8-1.400-11 .4 3-.2 5-1.200 6.400.2-3-1-6.200-3.600-8 1.600 3.600.4 7-2.400 8.600-2.600 1.500-5.400.6-6.800-1.200 1.800.6 3.600 0 4.600-1.200-1.600.2-3.200-.4-4-2-.9-1.800-.2-3.400 1.200-4.600-2.600.2-4.800 1.400-6 3.400-1.200-.8-2-2.600-1.600-4.600C6.300 8 4.100 9 3.200 10.500z" fill="url(#ff)"/></svg>
<div class="t ui" style="left:1026.7px;top:767px;font-size:11.5px;letter-spacing:-1.294px;color:#fff"><span id="t111">EN</span></div>
<svg class="a" style="left:1057.15px;top:779.61px" width="8" height="5" viewBox="0 0 10 6"><path d="M0 6h10L5 0z" fill="#fff"/></svg>
<svg class="a" style="left:1076.45px;top:770.04px" width="18" height="18" viewBox="0 0 18 18"><path d="M3 2v15" stroke="#fff" stroke-width="1.800"/><path d="M4 3c3-1.600 5 1.400 9.500-.4v7.200C9 11.600 7 8.600 4 10.200z" fill="#fff" stroke="#6b7c96" stroke-width=".6"/></svg>
<svg class="a" style="left:1100.81px;top:769.04px" width="20" height="20" viewBox="0 0 20 20"><path d="M5.500 2L10 5 5.500 8 1 5zM14.500 2L19 5l-4.500 3L10 5zM5.500 8L10 11l-4.500 3L1 11zM14.500 8L19 11l-4.500 3L10 11zM10 12l4.500 3L10 18l-4.500-3z" fill="#2f8fe6" stroke="#1c67b4" stroke-width=".5"/><circle cx="15" cy="15.500" r="4" fill="#3fae3f" stroke="#fff" stroke-width=".8"/><path d="M13 15.500l1.500 1.500 2.500-3" fill="none" stroke="#fff" stroke-width="1.200"/></svg>
<svg class="a" style="left:1122.98px;top:769.04px" width="20" height="20" viewBox="0 0 20 20"><rect x="3" y="3" width="9" height="14" rx="1" fill="#fff" stroke="#5a6b85" stroke-width="1"/><rect x="5.500" y="1.200" width="4" height="2" fill="#fff" stroke="#5a6b85" stroke-width=".6"/><path d="M11 8h3v-3M11 12h3v3M14 8v4h3.500" fill="none" stroke="#fff" stroke-width="1.800"/><rect x="5" y="6" width="5" height="3" fill="#8fa3c0"/></svg>
<div class="a" style="left:1149.93px;top:784.78px;width:2.54px;height:2.94px;background:#fff;box-shadow:0 0 0 .6px #6b7c96"></div>
<div class="a" style="left:1153.4px;top:782.24px;width:2.54px;height:5.47px;background:#fff;box-shadow:0 0 0 .6px #6b7c96"></div>
<div class="a" style="left:1156.88px;top:779.71px;width:2.54px;height:8.01px;background:#fff;box-shadow:0 0 0 .6px #6b7c96"></div>
<div class="a" style="left:1160.35px;top:777.17px;width:2.54px;height:10.55px;background:#fff;box-shadow:0 0 0 .6px #6b7c96"></div>
<div class="a" style="left:1163.82px;top:774.63px;width:2.54px;height:13.08px;background:#fff;box-shadow:0 0 0 .6px #6b7c96"></div>
<svg class="a" style="left:1171.04px;top:769.17px" width="20" height="20" viewBox="0 0 20 20"><path d="M2 7.500h3.500L10 3.500v13l-4.500-4H2z" fill="#fff" stroke="#6b7c96" stroke-width=".7"/><path d="M12.500 7a4.500 4.500 0 0 1 0 6M14.800 5a7.500 7.500 0 0 1 0 10" fill="none" stroke="#fff" stroke-width="1.300"/></svg>
<div class="t ui" style="left:1215.22px;top:762px;font-size:12px;letter-spacing:0.637px;color:#fff"><span id="t112">21:38</span></div>
<div class="t ui" style="left:1205.61px;top:779px;font-size:12px;letter-spacing:-0.265px;color:#fff"><span id="t113">27/8/2557</span></div>
<div class="a" style="left:1265.95px;top:760.75px;width:15.75px;height:40.32px;background:linear-gradient(90deg,rgba(40,55,90,.38),rgba(60,80,115,.22) 40%,rgba(255,255,255,.10));border-left:1px solid #55677f;box-shadow:inset 1px 0 0 rgba(255,255,255,.25)"></div>
<svg class="a" style="left:210.75px;top:255.88px" width="14" height="21" viewBox="-1 -1 14 21"><path d="M0 0V16.200L3.700 12.600L6.500 18.800L8.700 17.800L6 11.900H11.200Z" fill="#fff" stroke="#3a3a3a" stroke-width="1.100" stroke-linejoin="miter"/></svg>
</div>
</body>
</html>
